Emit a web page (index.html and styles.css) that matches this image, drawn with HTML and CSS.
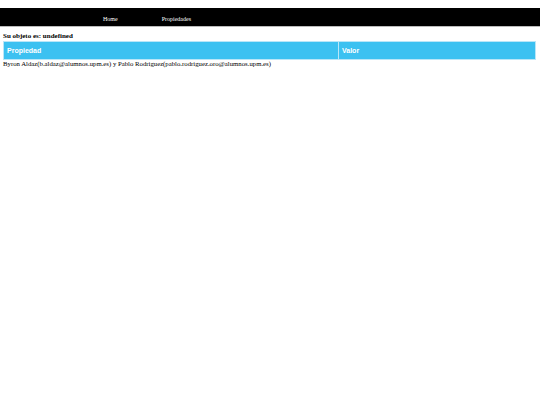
FILE: index.html
```html
<!DOCTYPE html>
<html lang="es">
<head>
<meta charset="utf-8">
<title>Propiedades</title>
<link rel="stylesheet" href="styles.css">
</head>
<body>
<nav class="topnav">
  <ul class="menu">
    <li><a href="#">Home</a></li>
    <li><a href="#">Propiedades</a></li>
  </ul>
</nav>
<main class="content">
  <h3 class="title">Su objeto es: undefined</h3>
  <table class="props">
    <thead>
      <tr><th class="col-prop">Propiedad</th><th>Valor</th></tr>
    </thead>
  </table>
  <p class="authors">Byron Aldaz(b.aldaz@alumnos.upm.es) y Pablo Rodriguez(pablo.rodriguez.oro@alumnos.upm.es)</p>
</main>
</body>
</html>
```
FILE: styles.css
```css
html, body {
  margin: 0;
  padding: 0;
  background: #fff;
  font-family: "Liberation Serif", "Times New Roman", serif;
}
.topnav {
  margin-top: 8px;
  background: #000;
  border-bottom: 1px solid #bbb;
  height: 18px;
}
.menu {
  list-style: none;
  margin: 0;
  padding: 0 0 3px 103px;
  box-sizing: border-box;
  display: flex;
  align-items: center;
  height: 18px;
  gap: 44px;
}
.menu a {
  color: #fff;
  text-decoration: none;
  font-size: 6px;
}
.content {
  padding: 0 4px 0 3px;
}
.title {
  margin: 5px 0 0;
  font-size: 7px;
  line-height: 9px;
  font-weight: bold;
}
.props {
  width: 100%;
  border-collapse: separate;
  border-spacing: 1px;
  background: #b9e6f8;
}
.props th {
  background: #3cc1f1;
  color: #fff;
  text-align: left;
  font-family: "Liberation Sans", Arial, sans-serif;
  font-size: 7px;
  font-weight: bold;
  height: 17px;
  padding: 0 3px;
}
.props .col-prop {
  width: 328px;
}
.authors {
  margin: 0;
  font-size: 6.75px;
  line-height: 8px;
}
```
